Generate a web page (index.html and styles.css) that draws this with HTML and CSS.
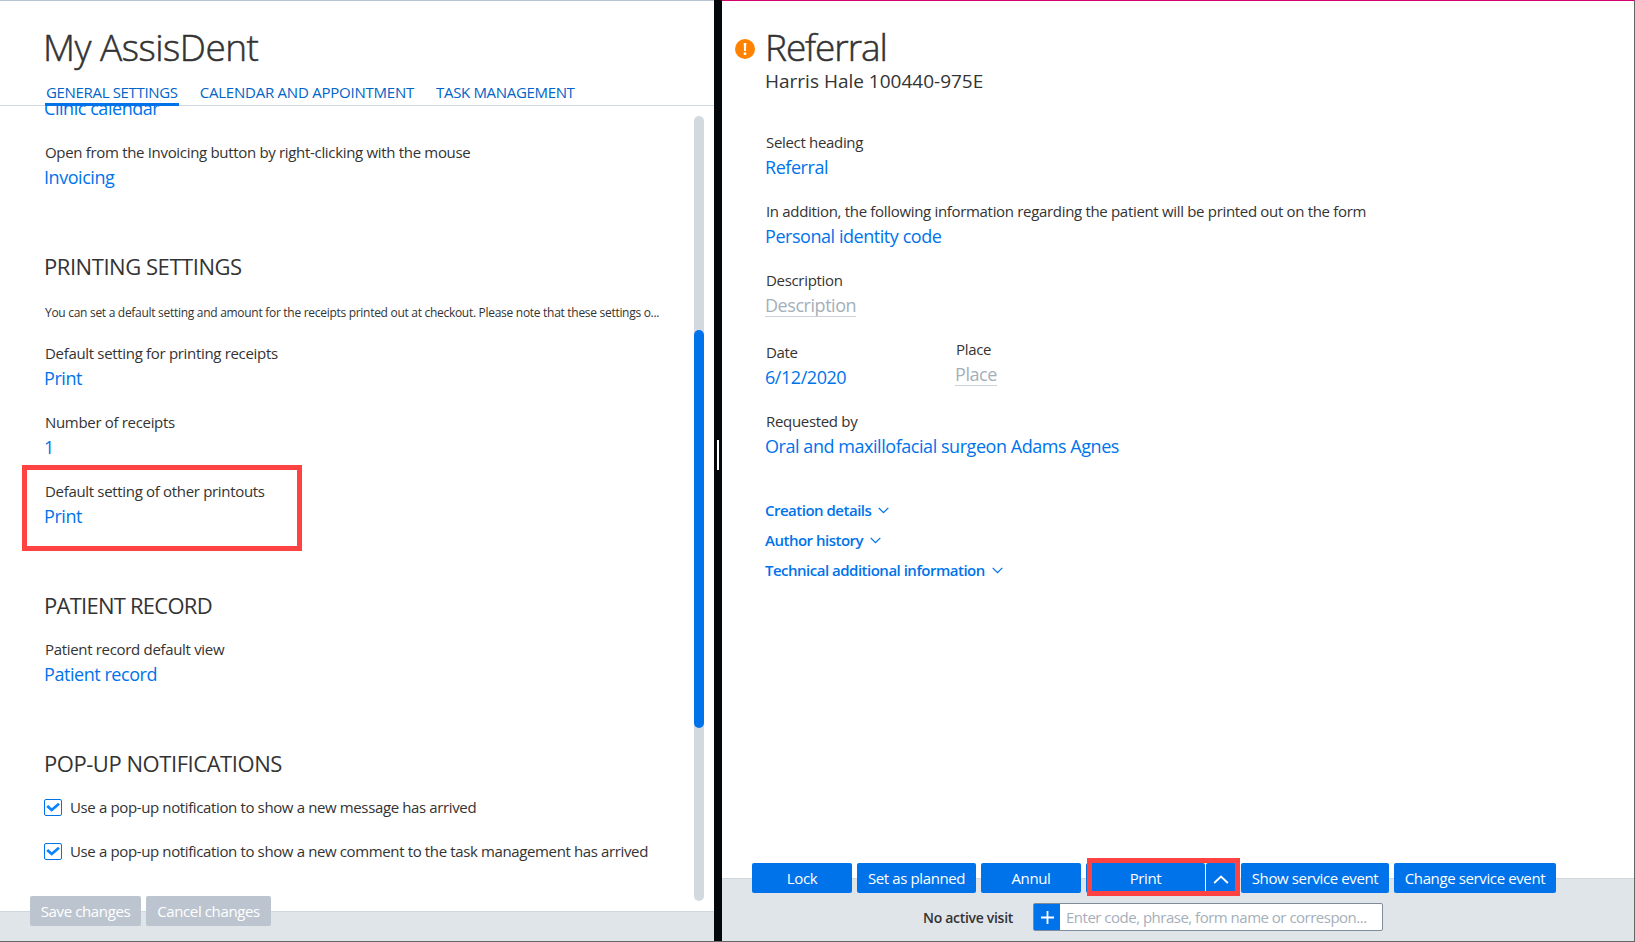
FILE: index.html
```html
<!DOCTYPE html>
<html lang="en">
<head>
    <meta charset="UTF-8">
    <meta name="viewport" content="width=device-width, initial-scale=1.0">
    <title>My AssisDent</title>
    <link rel="stylesheet" href="styles.css">
</head>
<body>
    <div class="app">
        <section class="panel settings">
            <header class="settings-header">
                <h1>My AssisDent</h1>
                <nav class="tabs">
                    <a class="tab active">GENERAL SETTINGS</a>
                    <a class="tab tab-calendar">CALENDAR AND APPOINTMENT</a>
                    <a class="tab">TASK MANAGEMENT</a>
                </nav>
            </header>

            <div class="settings-body">
                <div class="settings-content">
                    <div class="field scrolled">
                        <div class="value">Clinic calendar</div>
                    </div>
                    <div class="field">
                        <div class="label">Open from the Invoicing button by right-clicking with the mouse</div>
                        <div class="value">Invoicing</div>
                    </div>

                    <h2>PRINTING SETTINGS</h2>
                    <p class="note">You can set a default setting and amount for the receipts printed out at checkout. Please note that these settings o...</p>
                    <div class="field">
                        <div class="label">Default setting for printing receipts</div>
                        <div class="value">Print</div>
                    </div>
                    <div class="field">
                        <div class="label">Number of receipts</div>
                        <div class="value">1</div>
                    </div>
                    <div class="field marked">
                        <div class="label">Default setting of other printouts</div>
                        <div class="value">Print</div>
                        <div class="mark mark-field"></div>
                    </div>

                    <h2 class="tight">PATIENT RECORD</h2>
                    <div class="field">
                        <div class="label">Patient record default view</div>
                        <div class="value">Patient record</div>
                    </div>

                    <h2>POP-UP NOTIFICATIONS</h2>
                    <div class="check-row">
                        <svg class="checkbox" width="18" height="17" viewBox="0 0 18 17"><rect x=".5" y=".5" width="17" height="16" rx="1.5"/><path d="M3.2 7 7.7 11 15 4.8"/></svg>
                        <span>Use a pop-up notification to show a new message has arrived</span>
                    </div>
                    <div class="check-row">
                        <svg class="checkbox" width="18" height="17" viewBox="0 0 18 17"><rect x=".5" y=".5" width="17" height="16" rx="1.5"/><path d="M3.2 7 7.7 11 15 4.8"/></svg>
                        <span>Use a pop-up notification to show a new comment to the task management has arrived</span>
                    </div>
                </div>
                <div class="scrollbar"><div class="thumb"></div></div>
            </div>

            <footer class="footer settings-footer">
                <div class="buttons">
                    <button class="btn disabled save">Save changes</button>
                    <button class="btn disabled cancel">Cancel changes</button>
                </div>
            </footer>
        </section>

        <div class="splitter"><div class="grip"></div></div>

        <section class="panel referral">
            <header class="referral-header">
                <svg class="alert" width="20" height="20" viewBox="0 0 20 20"><circle cx="10" cy="10" r="10"/><path d="M8.7 4h2.6l-.4 8H9.1z"/><circle class="dot" cx="10" cy="14.7" r="1.4"/></svg>
                <div>
                    <h1 class="tight">Referral</h1>
                    <div class="patient">Harris Hale 100440-975E</div>
                </div>
            </header>

            <div class="referral-body">
                <div class="field">
                    <div class="label">Select heading</div>
                    <div class="value">Referral</div>
                </div>
                <div class="field">
                    <div class="label">In addition, the following information regarding the patient will be printed out on the form</div>
                    <div class="value">Personal identity code</div>
                </div>
                <div class="field">
                    <div class="label">Description</div>
                    <div class="value"><span class="empty">Description</span></div>
                </div>
                <div class="field-row">
                    <div class="field date">
                        <div class="label">Date</div>
                        <div class="value">6/12/2020</div>
                    </div>
                    <div class="field">
                        <div class="label">Place</div>
                        <div class="value"><span class="empty">Place</span></div>
                    </div>
                </div>
                <div class="field">
                    <div class="label">Requested by</div>
                    <div class="value">Oral and maxillofacial surgeon Adams Agnes</div>
                </div>

                <div class="expanders">
                    <a>Creation details <svg width="11" height="7" viewBox="0 0 11 7"><path d="M.7.9 5.5 5.6 10.3.9"/></svg></a>
                    <a>Author history <svg width="11" height="7" viewBox="0 0 11 7"><path d="M.7.9 5.5 5.6 10.3.9"/></svg></a>
                    <a>Technical additional information <svg width="11" height="7" viewBox="0 0 11 7"><path d="M.7.9 5.5 5.6 10.3.9"/></svg></a>
                </div>
            </div>

            <footer class="footer referral-footer">
                <div class="buttons">
                    <button class="btn lock">Lock</button>
                    <button class="btn planned">Set as planned</button>
                    <button class="btn annul">Annul</button>
                    <div class="split-btn">
                        <button class="btn print">Print</button>
                        <button class="btn caret"><svg width="16" height="9" viewBox="0 0 16 9"><path d="M1.2 8 8 1.5 14.8 8"/></svg></button>
                        <div class="mark mark-print"></div>
                    </div>
                    <button class="btn show">Show service event</button>
                    <button class="btn change">Change service event</button>
                </div>
                <div class="visit">
                    <span class="visit-label">No active visit</span>
                    <div class="search">
                        <div class="plus"><svg width="13" height="13" viewBox="0 0 13 13"><path d="M6.5 0v13M0 6.5h13"/></svg></div>
                        <span>Enter code, phrase, form name or correspon...</span>
                    </div>
                </div>
            </footer>
        </section>
    </div>
</body>
</html>
```
FILE: styles.css
```css
:root {
    --blue: #0073eb;
    --text: #333;
    --line: #d0d8df;
    --footer: #e0e5e9;
    --mark: #ff4242;
}

* {
    box-sizing: border-box;
}

body {
    margin: 0;
    font-family: "Segoe UI", "Open Sans", "Noto Sans", sans-serif;
    font-size: 15px;
    color: var(--text);
    background: #fff;
}

.app {
    display: flex;
    width: 1635px;
    height: 942px;
    border-bottom: 1px solid #666;
    overflow: hidden;
}

.panel {
    display: flex;
    flex-direction: column;
    white-space: nowrap;
}

.settings {
    width: 714px;
    border-top: 1px solid #b8c5d4;
}

.referral {
    flex: 1;
    border-top: 1px solid #d6006e;
    border-right: 1px solid #666;
}

h1 {
    margin: 0 0 0 -1px;
    font-size: 37px;
    font-weight: 300;
    line-height: 50px;
    letter-spacing: -0.5px;
    -webkit-text-stroke: 0.5px var(--text);
}

h1.tight {
    margin-left: 0;
    letter-spacing: -1.1px;
}

h2 {
    margin: 60px 0 18px;
    font-size: 22px;
    font-weight: 400;
    line-height: 30px;
    letter-spacing: -0.45px;
}

h2.tight {
    letter-spacing: -0.75px;
}

/* left panel */
.settings-header {
    height: 105px;
    padding: 21px 0 0 44px;
    border-bottom: 1px solid var(--line);
}

.tabs {
    display: flex;
    gap: 20px;
    margin-top: 8px;
    padding-left: 1px;
}

.tab {
    height: 26px;
    padding: 0 1px;
    line-height: 25px;
    color: #0064c8;
    letter-spacing: -0.33px;
}

.tab-calendar {
    letter-spacing: -0.23px;
}

.tab.active {
    border-bottom: 3px solid var(--blue);
}

.settings-body {
    display: flex;
    justify-content: space-between;
    height: 805px;
    padding-right: 10px;
    overflow: hidden;
}

.settings-content {
    padding-left: 44px;
}

.field {
    margin-bottom: 19px;
}

.field.scrolled {
    margin-top: -12px;
}

.field:has(+ h2) {
    margin-bottom: 0;
}

.label {
    padding-left: 1px;
    line-height: 22px;
    letter-spacing: -0.32px;
}

.value {
    font-size: 18px;
    line-height: 28px;
    letter-spacing: -0.45px;
    color: var(--blue);
}

.empty {
    display: inline-block;
    height: 26px;
    color: #a5afba;
    border-bottom: 1px solid #ccd2d8;
}

.note {
    margin: 23px 0 20px;
    padding-left: 1px;
    font-size: 12px;
    line-height: 18px;
    letter-spacing: -0.29px;
}

.marked,
.split-btn {
    position: relative;
}

.mark {
    position: absolute;
    border: 5px solid var(--mark);
}

.mark-field {
    left: -22px;
    top: -15px;
    width: 280px;
    height: 86px;
}

.check-row {
    display: flex;
    align-items: center;
    gap: 8px;
    height: 22px;
    margin-bottom: 22px;
    letter-spacing: -0.37px;
}

.checkbox {
    fill: #fff;
    stroke: var(--blue);
}

.checkbox path {
    fill: none;
    stroke: #0a84ff;
    stroke-width: 2.8;
}

.scrollbar {
    width: 10px;
    height: 785px;
    margin-top: 10px;
    padding-top: 214px;
    border-radius: 5px;
    background: #d2d9df;
}

.thumb {
    height: 398px;
    border-radius: 5px;
    background: var(--blue);
}

.splitter {
    display: flex;
    align-items: center;
    justify-content: center;
    width: 8px;
    padding-bottom: 32px;
    background: #03080c;
}

.grip {
    width: 2px;
    height: 30px;
    background: #fff;
}

/* right panel */
.referral-header {
    display: flex;
    gap: 10px;
    padding: 21px 0 0 13px;
}

.alert {
    margin-top: 17px;
    fill: #ff8200;
}

.alert path,
.alert .dot {
    fill: #fff;
}

.patient {
    font-size: 19px;
    line-height: 26px;
    margin-top: -4px;
}

.referral-body {
    flex: 1;
    padding: 37px 0 0 43px;
}

.field-row {
    display: flex;
}

.field.date {
    width: 190px;
    padding-top: 3px;
}

.expanders {
    margin-top: 35px;
}

.expanders a {
    display: flex;
    align-items: center;
    gap: 7px;
    height: 30px;
    font-weight: 600;
    letter-spacing: -0.5px;
    color: var(--blue);
}

.expanders path {
    fill: none;
    stroke: var(--blue);
    stroke-width: 1.3;
}

/* footers */
.footer {
    border-top: 1px solid var(--line);
    background: var(--footer);
}

.settings-footer {
    height: 30px;
    padding-left: 30px;
}

.referral-footer {
    height: 63px;
    padding-left: 30px;
}

.buttons {
    display: flex;
    gap: 5px;
    margin-top: -16px;
}

.btn {
    height: 30px;
    padding: 0;
    border: none;
    border-radius: 2px;
    font: inherit;
    letter-spacing: -0.38px;
    color: #fff;
    background: var(--blue);
}

.btn.disabled {
    background: #bcc5cf;
}

.save { width: 111px; }
.cancel { width: 125px; }
.lock, .annul { width: 100px; }
.planned { width: 119px; }
.show { width: 148px; }
.change { width: 162px; }

.split-btn {
    display: flex;
    gap: 1px;
    width: 150px;
    background: #fff;
}

.print { width: 119px; }
.caret { width: 30px; }

.caret path,
.plus path {
    fill: none;
    stroke: #fff;
    stroke-width: 1.8;
}

.mark-print {
    left: 1px;
    top: -5px;
    width: 153px;
    height: 38px;
}

.visit {
    display: flex;
    align-items: center;
    gap: 21px;
    margin-top: 10px;
    padding-left: 171px;
}

.visit-label {
    width: 91px;
    font-size: 14px;
    font-weight: 600;
    letter-spacing: -0.3px;
}

.search {
    display: flex;
    align-items: center;
    width: 350px;
    height: 28px;
    margin-left: -2px;
    border: 1px solid #7f8c9b;
    border-radius: 2px;
    background: #fff;
    color: #a5afba;
    letter-spacing: -0.5px;
}

.plus {
    display: flex;
    align-items: center;
    justify-content: center;
    width: 26px;
    height: 26px;
    margin-right: 6px;
    background: var(--blue);
}
```
